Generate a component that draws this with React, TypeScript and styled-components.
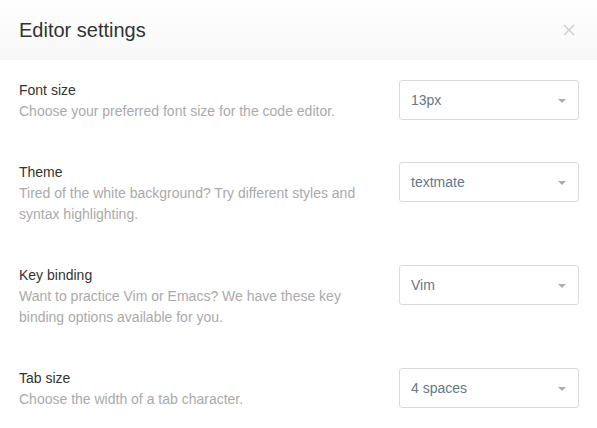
import React from "react";
import styled, { createGlobalStyle } from "styled-components";

const Global = createGlobalStyle`
  html, body { margin: 0; padding: 0; background: #fff; }
  body { font-family: "Liberation Sans", Arial, sans-serif; }
`;

const Modal = styled.div`
  width: 597px;
  background: #fff;
`;

const Header = styled.div`
  height: 60px;
  display: flex;
  align-items: center;
  justify-content: space-between;
  padding: 0 20px 0 19px;
  background: linear-gradient(to bottom, #ffffff, #f7f7f7);
  border-top-left-radius: 3px;
`;

const Title = styled.h1`
  margin: 0;
  font-size: 20px;
  font-weight: 400;
  color: #333;
`;

const Close = styled.button`
  border: 0;
  background: none;
  padding: 0;
  width: 16px;
  height: 16px;
  display: flex;
  align-items: center;
  justify-content: center;
  cursor: pointer;
`;

const Body = styled.div`
  padding: 20px 18px 20px 19px;
  display: flex;
  flex-direction: column;
  gap: 40px;
`;

const Row = styled.div`
  display: flex;
  justify-content: space-between;
  align-items: flex-start;
`;

const Info = styled.div`
  width: 345px;
  font-size: 14px;
  line-height: 21px;
`;

const Label = styled.div`
  color: #333;
`;

const Desc = styled.div`
  color: #aaaaaa;
`;

const Select = styled.div`
  box-sizing: border-box;
  width: 180px;
  height: 40px;
  border: 1px solid #d6dbe0;
  border-radius: 3px;
  display: flex;
  align-items: center;
  justify-content: space-between;
  padding: 0 12px 0 11px;
  font-size: 14px;
  color: #62798a;
`;

const Caret = styled.span`
  width: 0;
  height: 0;
  border-left: 4px solid transparent;
  border-right: 4px solid transparent;
  border-top: 4px solid #a3adb6;
  margin-top: 1px;
`;

const rows = [
  { label: "Font size", desc: "Choose your preferred font size for the code editor.", value: "13px" },
  { label: "Theme", desc: "Tired of the white background? Try different styles and syntax highlighting.", value: "textmate" },
  { label: "Key binding", desc: "Want to practice Vim or Emacs? We have these key binding options available for you.", value: "Vim" },
  { label: "Tab size", desc: "Choose the width of a tab character.", value: "4 spaces" },
];

export default function App() {
  return (
    <>
      <Global />
      <Modal>
        <Header>
          <Title>Editor settings</Title>
          <Close aria-label="Close">
            <svg width="12" height="12" viewBox="0 0 12 12">
              <path d="M1 1L11 11M11 1L1 11" stroke="#c9cfd4" strokeWidth="1.4" />
            </svg>
          </Close>
        </Header>
        <Body>
          {rows.map((r) => (
            <Row key={r.label}>
              <Info>
                <Label>{r.label}</Label>
                <Desc>{r.desc}</Desc>
              </Info>
              <Select>
                <span>{r.value}</span>
                <Caret />
              </Select>
            </Row>
          ))}
        </Body>
      </Modal>
    </>
  );
}
